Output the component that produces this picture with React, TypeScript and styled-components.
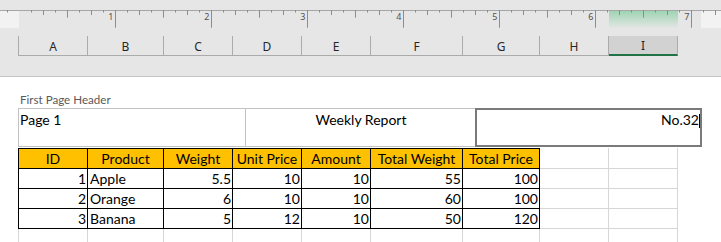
import React from "react";
import styled, { createGlobalStyle } from "styled-components";

const GlobalStyle = createGlobalStyle`
  html, body { margin: 0; padding: 0; background: #ffffff; overflow: hidden; }
  body { font-family: "Lato", "Liberation Sans", sans-serif; }
  * { box-sizing: border-box; }
`;

const COLS = [
  { key: "A", w: 70 },
  { key: "B", w: 76 },
  { key: "C", w: 69 },
  { key: "D", w: 69 },
  { key: "E", w: 69 },
  { key: "F", w: 92 },
  { key: "G", w: 77 },
  { key: "H", w: 69 },
  { key: "I", w: 69 },
];
const TRACKS = COLS.map((c) => `${c.w}px`).join(" ");

const Root = styled.div`
  width: 721px;
  height: 242px;
  overflow: hidden;
  background: #ffffff;
`;

const TopBar = styled.div`
  height: 77px;
  background: #e6e6e6;
  border-bottom: 1px solid #c6c6c6;
  padding-top: 10px;
`;

const RulerSvg = styled.svg`
  display: block;
  width: 721px;
  height: 18px;
`;

const ColumnHeaders = styled.div`
  display: grid;
  grid-template-columns: ${TRACKS};
  margin: 8px 0 0 18px;
  height: 20px;
`;

const ColHead = styled.div<{ $first?: boolean; $selected?: boolean }>`
  height: 20px;
  display: flex;
  align-items: center;
  justify-content: center;
  font-family: "Noto Sans", "Open Sans", sans-serif;
  font-size: 12px;
  color: #262626;
  background: ${(p) => (p.$selected ? "#d2d2d2" : "transparent")};
  border-left: ${(p) => (p.$first ? "1px solid #ababab" : "0")};
  border-right: 1px solid #ababab;
  border-bottom: ${(p) => (p.$selected ? "2px solid #217346" : "1px solid #ababab")};
  padding-top: 1px;
`;

const Page = styled.div`
  padding: 16px 0 0 18px;
`;

const HeaderLabel = styled.div`
  font-size: 11.6px;
  line-height: 14px;
  color: #595959;
  padding-left: 2px;
  margin-bottom: 1px;
`;

const HeaderBox = styled.div`
  display: flex;
  height: 39px;
`;

const HeaderSection = styled.div<{ $w: number; $align: "left" | "center" | "right"; $active?: boolean }>`
  width: ${(p) => p.$w}px;
  height: 39px;
  border: ${(p) => (p.$active ? "2px solid #7a7a7a" : "1px solid #c3c3c3")};
  border-right: ${(p) => (p.$active ? "2px solid #7a7a7a" : "0")};
  padding: ${(p) => (p.$active ? "1px 0 0 0" : "2px 0 0 1px")};
  font-size: 14px;
  line-height: 18px;
  color: #000;
  text-align: ${(p) => p.$align};
  white-space: nowrap;
`;

const Caret = styled.span`
  display: inline-block;
  width: 1px;
  height: 14px;
  background: #000;
  vertical-align: -3px;
`;

const Grid = styled.div`
  display: grid;
  grid-template-columns: ${TRACKS};
  grid-auto-rows: 20px;
  grid-template-rows: 21px;
  margin-top: 1px;
`;

type Align = "left" | "center" | "right";

const Cell = styled.div<{ $table: boolean; $first?: boolean; $head?: boolean; $align: Align }>`
  border-right: 1px solid ${(p) => (p.$table ? "#000" : "#d6d6d6")};
  border-bottom: 1px solid ${(p) => (p.$table ? "#000" : "#d6d6d6")};
  border-left: ${(p) => (p.$first ? `1px solid ${p.$table ? "#000" : "#d6d6d6"}` : "0")};
  border-top: ${(p) => (p.$head && p.$table ? "1px solid #000" : "0")};
  background: ${(p) => (p.$head && p.$table ? "#ffc000" : "transparent")};
  font-size: 14px;
  line-height: 19px;
  color: #000;
  text-align: ${(p) => p.$align};
  padding: ${(p) => (p.$align === "left" ? "0 0 0 2px" : p.$align === "right" ? "0 1px 0 0" : "0")};
  white-space: nowrap;
  overflow: hidden;
`;

const HEAD = ["ID", "Product", "Weight", "Unit Price", "Amount", "Total Weight", "Total Price"];
const DATA: (string | number)[][] = [
  [1, "Apple", 5.5, 10, 10, 55, 100],
  [2, "Orange", 6, 10, 10, 60, 100],
  [3, "Banana", 5, 12, 10, 50, 120],
];

function Ruler() {
  const ticks: React.ReactNode[] = [];
  const digits: React.ReactNode[] = [];
  for (let k = -1; k <= 58; k++) {
    if (k === 0) continue;
    const x = 19.5 + 12 * k;
    const m = ((k % 8) + 8) % 8;
    const len = m === 0 ? 17.7 : m === 4 ? 7.7 : m % 2 === 0 ? 5 : 2.5;
    ticks.push(<line key={k} x1={x} x2={x} y1={0} y2={len} stroke="#8c8c8c" strokeWidth={1} />);
    if (m === 0) {
      digits.push(
        <text key={`d${k}`} x={x - 2} y={9.6} textAnchor="end" fontSize={9} fill="#505050" fontFamily="Noto Sans, sans-serif">
          {k / 8}
        </text>
      );
    }
  }
  return (
    <RulerSvg viewBox="0 0 721 18">
      <defs>
        <linearGradient id="sel" x1="0" y1="0" x2="0" y2="1">
          <stop offset="0" stopColor="#9fd4b3" />
          <stop offset="1" stopColor="#e3e6e4" />
        </linearGradient>
      </defs>
      <rect x={0} y={1} width={19} height={17} fill="#f2f2f2" />
      <rect x={701} y={1} width={20} height={17} fill="#f2f2f2" />
      <rect x={609} y={1} width={69} height={17} fill="url(#sel)" />
      <line x1={0} x2={721} y1={0.5} y2={0.5} stroke="#a6a6a6" strokeWidth={1} />
      {ticks}
      {digits}
    </RulerSvg>
  );
}

export default function App() {
  const numericCols = new Set([0, 2, 3, 4, 5, 6]);
  const cells: React.ReactNode[] = [];
  COLS.forEach((c, i) => {
    const table = i < 7;
    cells.push(
      <Cell key={`h${i}`} $table={table} $first={i === 0} $head $align="center">
        {table ? HEAD[i] : ""}
      </Cell>
    );
  });
  DATA.forEach((r, ri) => {
    COLS.forEach((c, i) => {
      const table = i < 7;
      cells.push(
        <Cell key={`r${ri}-${i}`} $table={table} $first={i === 0} $align={table && numericCols.has(i) ? "right" : "left"}>
          {table ? r[i] : ""}
        </Cell>
      );
    });
  });
  COLS.forEach((c, i) => {
    cells.push(<Cell key={`e${i}`} $table={false} $first={i === 0} $align="left" />);
  });

  return (
    <Root>
      <GlobalStyle />
      <TopBar>
        <Ruler />
        <ColumnHeaders>
          {COLS.map((c, i) => (
            <ColHead key={c.key} $first={i === 0} $selected={c.key === "I"}>
              {c.key}
            </ColHead>
          ))}
        </ColumnHeaders>
      </TopBar>
      <Page>
        <HeaderLabel>First Page Header</HeaderLabel>
        <HeaderBox>
          <HeaderSection $w={227} $align="left">Page 1</HeaderSection>
          <HeaderSection $w={230} $align="center">Weekly Report</HeaderSection>
          <HeaderSection $w={227} $align="right" $active>
            No.32<Caret />
          </HeaderSection>
        </HeaderBox>
        <Grid>{cells}</Grid>
      </Page>
    </Root>
  );
}
